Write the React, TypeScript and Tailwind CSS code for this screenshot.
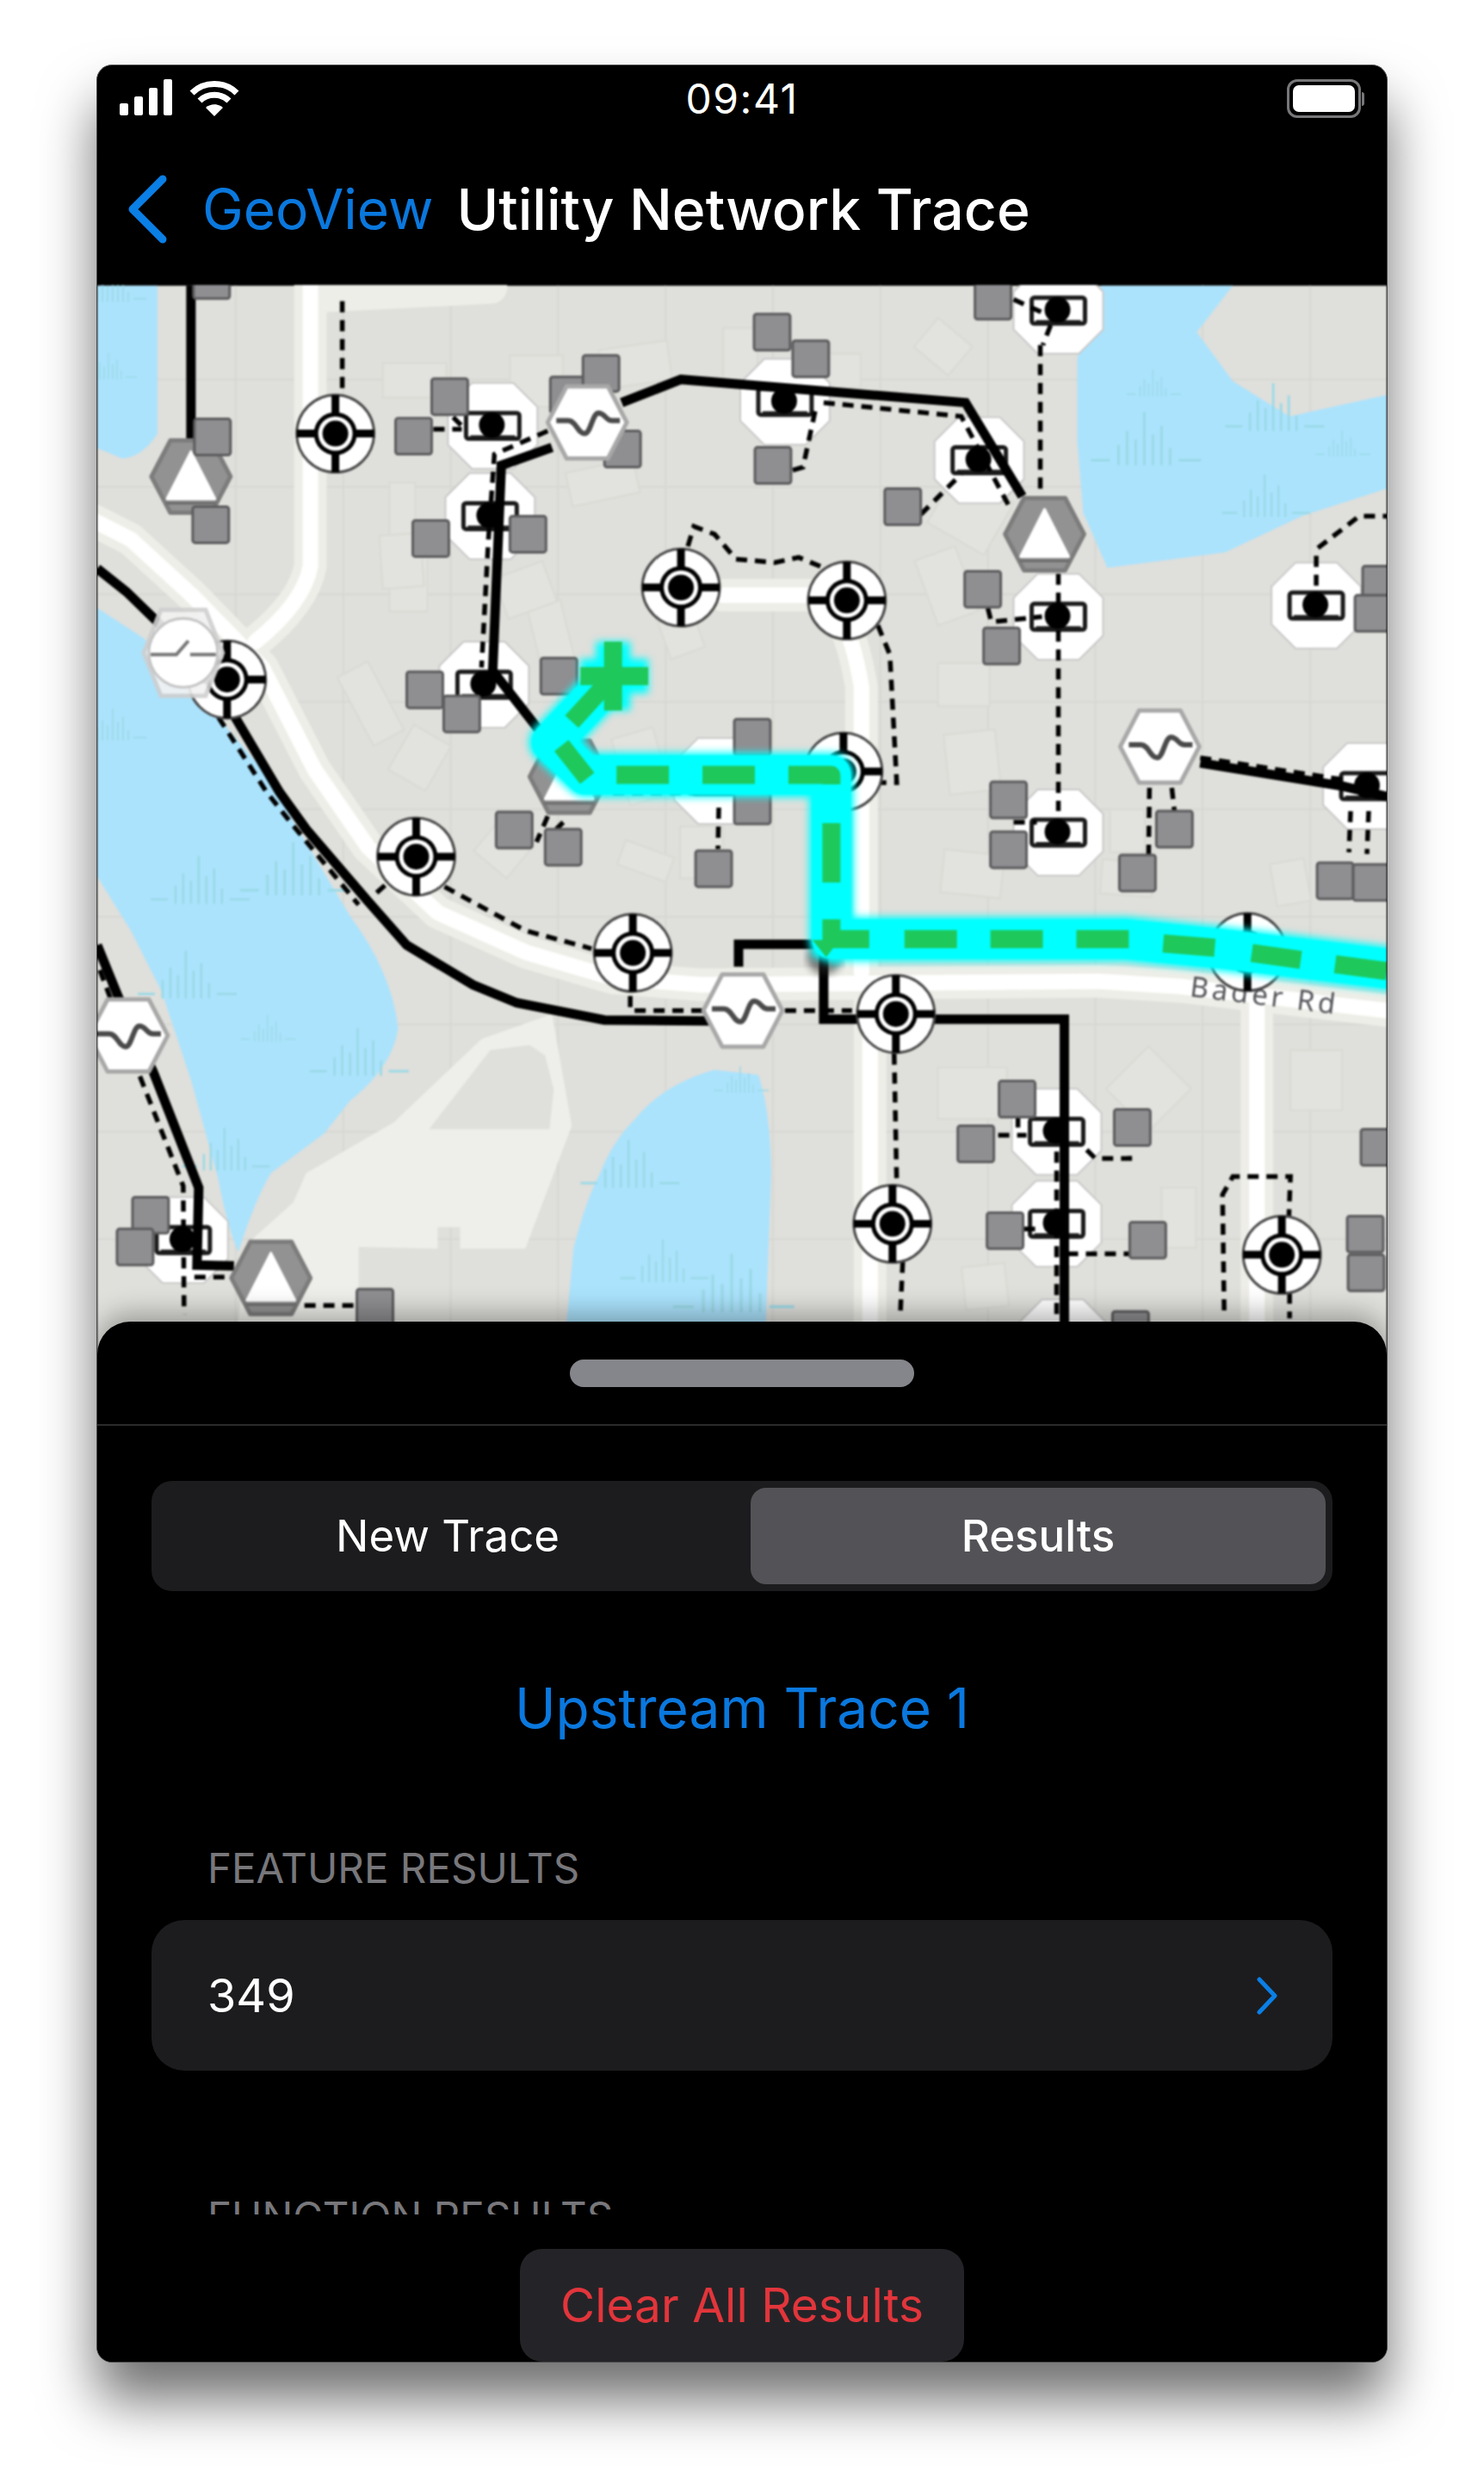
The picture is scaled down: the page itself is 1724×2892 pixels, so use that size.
// ─── Map data (page pixel coordinates, the svg viewBox uses the same space) ───

const SQUARES: [number, number][] = [
  [245, 325], [246, 507], [244, 609], [522, 460], [480, 506], [660, 458], [698, 433], [723, 521],
  [500, 625], [613, 620], [897, 385], [942, 416], [898, 540], [649, 785], [493, 801], [536, 829],
  [874, 856], [1154, 349], [1049, 588], [1142, 684], [1164, 750], [1605, 678], [1596, 712],
  [597, 964], [654, 984], [829, 1009], [874, 936], [174, 1412], [156, 1449], [435, 1519],
  [1172, 929], [1172, 987], [1365, 963], [1322, 1014], [1552, 1023], [1594, 1025], [1182, 1277],
  [1134, 1329], [1316, 1310], [1168, 1430], [1334, 1441], [1603, 1333], [1587, 1434], [1588, 1479],
  [1314, 1545],
];

const TRANSFORMERS: [number, number][] = [
  [572, 494], [569, 599], [562, 795], [912, 466], [1230, 360], [1138, 534], [1230, 716], [1530, 703],
  [1590, 913], [1230, 967], [1228, 1315], [1228, 1422], [212, 1441], [835, 907], [1235, 1560],
];

const VALVES: [number, number][] = [
  [389, 503], [791, 682], [263, 789], [984, 697], [980, 896], [483, 995], [735, 1107], [1041, 1178],
  [1037, 1422], [1490, 1458], [1450, 1106],
];

const REGULATORS: [number, number][] = [
  [682, 490], [1348, 867], [148, 1203], [863, 1174],
];

const TOWERS: [number, number][] = [
  [221, 553], [1214, 620], [314, 1485], [661, 902],
];

const WATER = [
  "M112 331 L182 331 L182 503 Q165 530 141 532 L112 520 Z",
  "M1280 331 L1433 331 L1391 385 L1433 442 L1499 483 L1612 458 L1612 567 L1513 599 L1424 641 L1287 659 L1259 595 L1252 511 L1252 416 Z",
  "M112 706 L166 741 L253 833 L304 894 L406 1064 Q455 1130 462 1195 Q455 1240 406 1279 L376 1317 L314 1363 Q295 1395 276 1455 Q262 1420 253 1371 L222 1258 L187 1152 L151 1081 L112 1018 Z",
  "M654 1580 L666 1451 Q680 1395 697 1363 Q712 1325 738 1300 Q770 1260 830 1243 L881 1249 Q895 1290 896 1363 L888 1580 Z",
];

const BLACK_LINES = [
  "M221 331 V510",
  "M722 467 L791 440 L1122 467 L1188 576",
  "M641 519 L582 540 L572 779 L640 866",
  "M112 660 L146 687 L182 722 L263 817 L324 920 L355 963 L427 1047 L472 1098 L549 1144 L600 1165 L702 1185 L824 1186",
  "M112 1098 L136 1157 L177 1245 L230 1380 L228 1470 L271 1471",
  "M858 1123 V1097 H957 V1184 H1237 V1540",
  "M1395 886 L1561 913 L1612 925",
];

const DASHED_LINES = [
  "M397 349 V458",
  "M503 498 H536 M526 484 L538 496",
  "M636 500 L574 527 L567 626 L559 775",
  "M799 634 L806 611 L830 620 L855 649 L900 653 L928 647 L957 659",
  "M1209 400 V576",
  "M1178 347 L1211 362 M1221 377 L1212 400",
  "M957 467 L1117 483 L1174 590",
  "M947 477 L933 542 L920 546",
  "M1070 597 L1117 550",
  "M1230 666 V942",
  "M1148 706 L1152 722 L1211 716",
  "M1020 726 L1034 760 L1042 909 L1020 909",
  "M1530 645 V687 M1532 636 L1580 599 H1612",
  "M1395 880 L1565 906",
  "M1336 915 L1335 993 M1362 915 L1365 942",
  "M1570 942 L1568 990 M1591 942 L1589 992",
  "M1178 955 H1205",
  "M835 938 L834 986",
  "M712 921 H814",
  "M636 948 L623 978 M654 955 L646 963",
  "M253 833 L309 920 L340 959 L416 1051",
  "M437 1037 L447 1028",
  "M516 1030 L610 1081 L687 1102",
  "M732 1157 V1174 H819 M912 1174 H990",
  "M115 1127 L161 1249 L212 1378 L213 1527",
  "M225 1484 H266",
  "M353 1517 H416",
  "M1039 1224 L1042 1376",
  "M1049 1466 L1046 1531",
  "M1498 1418 L1500 1367 H1433 L1421 1388 L1423 1531",
  "M1499 1502 V1532",
  "M1160 1319 H1193 M1183 1298 V1310",
  "M1263 1336 L1273 1346 H1313 V1335",
  "M1240 1457 H1315",
  "M1190 1428 H1205",
  "M1228 1338 V1531",
];

const BUILDINGS: [number, number, number, number, number][] = [
  [444, 421, 74, 40, 0], [592, 412, 62, 60, 0], [698, 400, 80, 46, -8], [840, 380, 40, 60, 0],
  [960, 410, 40, 40, 0], [1070, 380, 52, 44, 40], [1090, 560, 76, 70, 30], [1075, 640, 50, 80, -20],
  [452, 560, 30, 90, 0], [660, 540, 80, 40, -12], [620, 700, 40, 74, -14], [452, 640, 44, 70, 0],
  [442, 620, 48, 62, -4], [580, 660, 60, 50, -20], [768, 700, 42, 60, -20], [410, 772, 40, 90, -28],
  [462, 850, 50, 60, 30], [720, 850, 50, 80, -16], [1090, 770, 60, 50, 0], [1100, 850, 60, 70, -6],
  [1290, 940, 40, 50, 0], [1095, 990, 70, 50, 6], [1280, 1000, 60, 40, 4], [1480, 1000, 40, 50, -10],
  [1090, 1240, 80, 60, 0], [1300, 1230, 70, 70, 45], [1500, 1220, 60, 70, 0], [1120, 1470, 50, 50, -6],
  [1350, 1380, 40, 70, 0], [560, 960, 50, 50, 40], [720, 985, 60, 30, 20], [790, 960, 50, 60, 0],
];

const REEDS: [number, number, number][] = [
  [1330, 540, 1], [1480, 500, 0.9], [1470, 600, 0.8], [1340, 460, 0.5], [1560, 530, 0.5],
  [130, 350, 0.6], [125, 440, 0.5], [130, 860, 0.6], [230, 1050, 0.9], [340, 1040, 1],
  [215, 1160, 0.9], [310, 1210, 0.5], [415, 1250, 0.9], [260, 1360, 0.8],
  [730, 1380, 0.9], [770, 1490, 0.8], [850, 1525, 1.1], [860, 1270, 0.5],
];

const HEX = "-46,0 -24,-42 24,-42 46,0 24,42 -24,42";
const OCT = "-24,-50 24,-50 52,-22 52,22 24,50 -24,50 -52,22 -52,-22";

// ─── Map symbols ──────────────────────────────────────────────────────────────

function Transformer({ x, y }: { x: number; y: number }) {
  return (
    <g transform={`translate(${x} ${y})`}>
      <polygon points={OCT} fill="#ffffff" stroke="#c9c9c9" strokeWidth="2" strokeLinejoin="round" />
      <rect x="-31" y="-15" width="62" height="30" rx="3" fill="#ffffff" stroke="#1a1a1a" strokeWidth="5" />
      <rect x="-26" y="11" width="52" height="6" fill="#1a1a1a" />
      <circle cx="-1" cy="-1" r="15" fill="#000000" />
    </g>
  );
}

function Valve({ x, y }: { x: number; y: number }) {
  return (
    <g transform={`translate(${x} ${y})`}>
      <circle r="45" fill="#ffffff" stroke="#4a4a4a" strokeWidth="3" />
      <path d="M0 -45 V-20 M0 45 V20 M-45 0 H-20 M45 0 H20" stroke="#000000" strokeWidth="9" />
      <circle r="25" fill="#000000" />
      <circle r="20" fill="#ffffff" />
      <circle r="15" fill="#000000" />
    </g>
  );
}

function Regulator({ x, y }: { x: number; y: number }) {
  return (
    <g transform={`translate(${x} ${y})`}>
      <polygon points={HEX} fill="#ffffff" stroke="#a8a8a8" strokeWidth="5" strokeLinejoin="round" />
      <path
        d="M-36 -2 H-22 C-13 -2 -11 13 -3 13 C4 13 6 -11 13 -11 C21 -11 21 -2 29 -2 H38"
        fill="none"
        stroke="#4a4a4a"
        strokeWidth="6"
      />
    </g>
  );
}

// The half transparent regulator that sits over the valve on the left shore
function FadedRegulator({ x, y }: { x: number; y: number }) {
  return (
    <g transform={`translate(${x} ${y})`}>
      <polygon points="-46,0 -26,-50 26,-50 46,0 26,50 -26,50" fill="#f2f2f2" stroke="#cfcfcf" strokeWidth="5" opacity="0.9" />
      <circle r="40" fill="#ffffff" stroke="#c4c4c4" strokeWidth="3" />
      <path d="M-38 2 H-8 L6 -14 M8 2 H38" fill="none" stroke="#777777" strokeWidth="4" />
    </g>
  );
}

function Tower({ x, y }: { x: number; y: number }) {
  return (
    <g transform={`translate(${x} ${y})`}>
      <polygon points={HEX} fill="#929292" stroke="#7c7c7c" strokeWidth="5" strokeLinejoin="round" />
      <polygon points="0,-29 -28,26 28,26" fill="#ffffff" stroke="#ffffff" strokeWidth="3" strokeLinejoin="round" />
      <path d="M-29 31 H29" stroke="#6d6d6d" strokeWidth="3" />
    </g>
  );
}

function Reed({ x, y, s }: { x: number; y: number; s: number }) {
  return (
    <g transform={`translate(${x} ${y}) scale(${s})`} stroke="#9ad9e6" strokeWidth="3" fill="none">
      <path d="M-30 0 V-24 M-20 0 V-40 M-10 0 V-30 M0 0 V-62 M10 0 V-36 M20 0 V-46 M30 0 V-20" />
      <path d="M-62 -6 H-40 M40 -6 H66" />
    </g>
  );
}

// ─── Map ──────────────────────────────────────────────────────────────────────

function TraceMap() {
  return (
    <svg viewBox="112 331 1500 1244" className="block h-full w-full blur-[1px]">
      <defs>
        <filter id="glow" x="-10%" y="-10%" width="120%" height="120%">
          <feGaussianBlur stdDeviation="4" />
        </filter>
      </defs>
      <rect x="112" y="331" width="1500" height="1244" fill="#dfdfdb" />

      {/* parcel grid */}
      <g stroke="#d7d7d3" strokeWidth="2">
        {[273, 398, 523, 648, 773, 898, 1023, 1148, 1273, 1398, 1523].map((x) => (
          <path key={x} d={`M${x} 331 V1575`} />
        ))}
        {[440, 565, 690, 815, 940, 1065, 1190, 1315, 1440].map((y) => (
          <path key={y} d={`M112 ${y} H1612`} />
        ))}
      </g>

      {/* buildings */}
      <g fill="#e2e2de" stroke="#dadad5" strokeWidth="2">
        {BUILDINGS.map(([x, y, w, h, r], i) => (
          <rect key={i} x={x} y={y} width={w} height={h} transform={`rotate(${r} ${x + w / 2} ${y + h / 2})`} />
        ))}
      </g>

      {/* park */}
      <path
        d="M289 1443 L340 1397 L355 1363 L457 1304 L559 1207 L641 1178 L664 1308 L610 1451 L534 1451 L534 1426 L508 1426 L508 1451 L416 1449 L416 1575 L270 1575 Z"
        fill="#eeeeea"
      />
      <path d="M498 1312 L569 1220 L615 1214 L633 1226 L643 1266 L638 1312 Z" fill="#dfdfdb" />

      {WATER.map((d) => (
        <path key={d} d={d} fill="#abe3fd" />
      ))}
      {REEDS.map(([x, y, s], i) => (
        <Reed key={i} x={x} y={y} s={s} />
      ))}

      {/* roads */}
      <g fill="none" strokeLinejoin="round" strokeLinecap="round">
        <g stroke="#eeeee8" strokeWidth="38">
          <path d="M100 600 L151 626 L222 691 L304 775 L365 894 L427 984 L508 1060 L610 1106 L712 1136 L814 1144 L1277 1140 L1372 1146 L1620 1175" />
          <path d="M360 320 V657 Q352 700 296 745" />
          <path d="M840 691 H947 Q985 700 1001 798 V1130" />
          <path d="M1011 1160 V1575 M1461 1160 V1575" />
          <path d="M375 343 L570 333" />
        </g>
        <g stroke="#ffffff" strokeWidth="18">
          <path d="M100 600 L151 626 L222 691 L304 775 L365 894 L427 984 L508 1060 L610 1106 L712 1136 L814 1144 L1277 1140 L1372 1146 L1620 1175" />
          <path d="M360 320 V657 Q352 700 296 745" />
          <path d="M840 691 H947 Q985 700 1001 798 V1130" />
          <path d="M1011 1160 V1575 M1461 1160 V1575" />
        </g>
      </g>

      <text
        x="1470"
        y="1168"
        textAnchor="middle"
        transform="rotate(7 1470 1156)"
        fontFamily="'Noto Sans', sans-serif"
        fontSize="33"
        letterSpacing="4"
        fill="#55565a"
      >
        Bader Rd
      </text>

      {TRANSFORMERS.map(([x, y]) => (
        <Transformer key={`${x}-${y}`} x={x} y={y} />
      ))}

      <g fill="none" stroke="#000000" strokeWidth="5.5" strokeDasharray="13 9">
        {DASHED_LINES.map((d) => (
          <path key={d} d={d} />
        ))}
      </g>
      <g fill="none" stroke="#000000" strokeWidth="11" strokeLinejoin="miter">
        {BLACK_LINES.map((d) => (
          <path key={d} d={d} />
        ))}
      </g>

      {VALVES.map(([x, y]) => (
        <Valve key={`${x}-${y}`} x={x} y={y} />
      ))}
      {TOWERS.map(([x, y]) => (
        <Tower key={`${x}-${y}`} x={x} y={y} />
      ))}

      {SQUARES.map(([x, y]) => (
        <rect
          key={`${x}-${y}`}
          x={x - 21}
          y={y - 21}
          width="42"
          height="42"
          rx="3"
          fill="#8f8e91"
          stroke="#5c5c5e"
          strokeWidth="3"
        />
      ))}

      {REGULATORS.map(([x, y]) => (
        <Regulator key={`${x}-${y}`} x={x} y={y} />
      ))}
      <FadedRegulator x={212} y={758} />

      {/* highlighted trace */}
      <circle cx="958" cy="1112" r="20" fill="#222222" opacity="0.55" filter="url(#glow)" />
      <g fill="none" stroke="#00ffff" strokeLinejoin="round" filter="url(#glow)">
        <path strokeWidth="52" d="M712 785 L640 862 L680 900 H966 V1091 H1310 L1419 1102 L1620 1126" />
        <path strokeWidth="40" d="M674 785 H753 M712 745 V825" />
        <path strokeWidth="34" d="M966 1091 L958 1116" />
      </g>
      <g fill="none" stroke="#00ffff" strokeWidth="46" strokeLinejoin="round">
        <path d="M706 792 L640 862 L680 900 H966 V1091 H1310 L1419 1102 L1620 1126" />
      </g>
      <g fill="none" stroke="#1fc85a" strokeWidth="21" strokeLinejoin="round">
        <path d="M674 785 H753 M712 745 V825" />
        <path d="M706 792 L664 838" />
        <path d="M652 866 L682 904 M716 900 H777 M816 900 H877 M916 900 H966 V940" strokeDasharray="61 38" />
        <path d="M966 956 V1025" />
        <path d="M966 1068 V1091 H1010" />
        <path d="M1051 1091 H1112 M1151 1091 H1212 M1251 1091 H1312 M1352 1096 L1412 1101 M1455 1107 L1512 1115 M1552 1120 L1612 1128" />
      </g>
      <polygon points="944,1092 966,1092 966,1068 975,1092 960,1112" fill="#1fc85a" />
    </svg>
  );
}

// ─── Status bar glyphs ────────────────────────────────────────────────────────

function SignalBars() {
  return (
    <div className="flex items-end gap-[7px]">
      <span className="h-[14px] w-[10px] rounded-[2px] bg-white" />
      <span className="h-[22px] w-[10px] rounded-[2px] bg-white" />
      <span className="h-[32px] w-[10px] rounded-[2px] bg-white" />
      <span className="h-[42px] w-[10px] rounded-[2px] bg-white" />
    </div>
  );
}

function WifiGlyph() {
  return (
    <svg width="58" height="44" viewBox="0 0 58 44" fill="none" stroke="#ffffff" strokeWidth="7">
      <path d="M3 16 C17 2 41 2 55 16" />
      <path d="M12 25 C21 16 37 16 46 25" />
      <path d="M29 43 L19 33 C25 28 33 28 39 33 Z" fill="#ffffff" stroke="none" />
    </svg>
  );
}

function BatteryGlyph() {
  return (
    <div className="flex items-center">
      <div className="flex h-[45px] w-[86px] items-center justify-center rounded-[12px] border-[3px] border-[#77777a]">
        <div className="h-[31px] w-[72px] rounded-[7px] bg-white" />
      </div>
      <span className="ml-[1px] h-[16px] w-[3px] rounded-r-full bg-[#77777a]" />
    </div>
  );
}

// ─── App ──────────────────────────────────────────────────────────────────────

export default function App() {
  return (
    <div className="h-[2892px] w-[1724px] bg-white pl-[112px] pt-[75px] font-['Inter',sans-serif]">
      <div className="flex h-[2669px] w-[1500px] flex-col overflow-hidden rounded-[18px] border border-[#4a4a4c] bg-black shadow-[0_44px_64px_rgba(0,0,0,0.56)]">
        {/* Status bar */}
        <div className="relative flex h-[72px] shrink-0 items-start justify-between pl-[26px] pr-[26px] pt-[16px]">
          <div className="flex items-start gap-[20px]">
            <SignalBars />
            <WifiGlyph />
          </div>
          <span className="absolute left-1/2 top-[14px] -translate-x-1/2 text-[48px] leading-[50px] tracking-[1.5px] text-white">
            09:41
          </span>
          <BatteryGlyph />
        </div>

        {/* Nav bar */}
        <div className="flex h-[183px] shrink-0 items-center pl-[34px] pt-[7px]">
          <svg width="48" height="80" viewBox="0 0 48 80" fill="none" className="mr-[40px]">
            <path d="M42 5 L7 40 L42 75" stroke="#0a7fe6" strokeWidth="9" strokeLinecap="round" strokeLinejoin="round" />
          </svg>
          <span className="text-[64px] leading-[70px] text-[#0a78de]">GeoView</span>
          <span className="ml-[27px] text-[66px] font-medium leading-[70px] text-white">Utility Network Trace</span>
        </div>

        {/* Map */}
        <div className="h-[1244px] shrink-0">
          <TraceMap />
        </div>

        {/* Bottom sheet */}
        <div className="relative -mt-[40px] flex min-h-0 flex-1 flex-col rounded-t-[38px] bg-black shadow-[0_-10px_30px_rgba(0,0,0,0.3)]">
          <div className="flex h-[121px] shrink-0 items-center justify-center border-b-2 border-[#2a2a2c]">
            <div className="h-[32px] w-[400px] rounded-[16px] bg-[#85858c]" />
          </div>

          <div className="h-[916px] shrink-0 overflow-hidden px-[63px] pt-[64px]">
            <div className="flex h-[128px] rounded-[24px] bg-[#1c1c1e] p-[8px] pl-0">
              <div className="flex flex-1 items-center justify-center pr-[8px] text-[51px] text-white">New Trace</div>
              <div className="flex w-[668px] items-center justify-center rounded-[18px] bg-[#535357] text-[51px] font-medium text-white">
                Results
              </div>
            </div>

            <h2 className="mt-[96px] text-center text-[64px] font-normal leading-[80px] text-[#0a78de]">
              Upstream Trace 1
            </h2>

            <h3 className="mt-[118px] pl-[65px] text-[47.5px] leading-[56px] text-[#77777b]">FEATURE RESULTS</h3>
            <div className="mt-[32px] flex h-[175px] items-center justify-between rounded-[38px] bg-[#1c1c1e] pl-[65px] pr-[62px]">
              <span className="text-[54px] text-white">349</span>
              <svg width="28" height="44" viewBox="0 0 28 44" fill="none">
                <path d="M5 3 L23 22 L5 41" stroke="#0a7fe6" strokeWidth="5" strokeLinecap="round" strokeLinejoin="round" />
              </svg>
            </div>

            <h3 className="mt-[142px] pl-[65px] text-[47.5px] leading-[56px] text-[#77777b]">FUNCTION RESULTS</h3>
          </div>

          <div className="flex flex-1 items-end justify-center">
            <div className="flex h-[131px] w-[516px] items-center justify-center rounded-[26px] bg-[#242428] text-[55px] text-[#e2353b]">
              Clear All Results
            </div>
          </div>
        </div>
      </div>
    </div>
  );
}
